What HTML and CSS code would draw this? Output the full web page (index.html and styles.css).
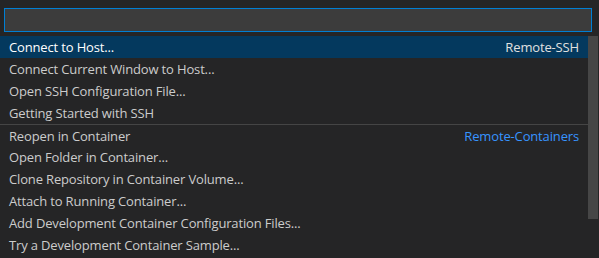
FILE: index.html
```html
<!DOCTYPE html>
<html>

<head>
	<meta charset="utf-8" />
	<title>Quick Pick</title>
	<link rel="stylesheet" href="styles.css">
</head>

<body>
	<div class="quick-input">
		<div class="filter">
			<input class="filter-box" type="text" />
		</div>
		<div class="list">
			<div class="row is-active">
				<span class="label">Connect to Host...</span>
				<span class="group">Remote-SSH</span>
			</div>
			<div class="row"><span class="label">Connect Current Window to Host...</span></div>
			<div class="row"><span class="label">Open SSH Configuration File...</span></div>
			<div class="row"><span class="label">Getting Started with SSH</span></div>
			<div class="row has-border">
				<span class="label">Reopen in Container</span>
				<span class="group is-link">Remote-Containers</span>
			</div>
			<div class="row"><span class="label">Open Folder in Container...</span></div>
			<div class="row"><span class="label">Clone Repository in Container Volume...</span></div>
			<div class="row"><span class="label">Attach to Running Container...</span></div>
			<div class="row"><span class="label">Add Development Container Configuration Files...</span></div>
			<div class="row"><span class="label">Try a Development Container Sample...</span></div>
			<div class="scrollbar"></div>
		</div>
	</div>
</body>

</html>
```

FILE: styles.css
```css
body {
	margin: 0;
	background-color: #252526;
	font-family: "Open Sans", "Noto Sans", sans-serif;
	font-size: 13px;
	letter-spacing: -0.15px;
	color: #cccccc;
}

.quick-input {
	width: 599px;
	height: 258px;
	overflow: hidden;
}

.filter {
	padding: 8px 7px 4px 4px;
}

.filter-box {
	display: block;
	box-sizing: border-box;
	width: 100%;
	height: 24px;
	margin: 0;
	background-color: #3c3c3c;
	border: 1px solid #007fd4;
	outline: none;
}

.list {
	position: relative;
	padding-right: 11px;
}

.row {
	display: flex;
	justify-content: space-between;
	align-items: center;
	box-sizing: border-box;
	height: 22px;
	padding: 0 9px 0 9px;
	white-space: nowrap;
}

.row.is-active {
	background-color: #04395e;
	color: #ffffff;
}

.row.has-border {
	border-top: 1px solid #454545;
}

.group {
	color: #e0e0e0;
}

.group.is-link {
	color: #3794ff;
}

.scrollbar {
	position: absolute;
	top: 0;
	right: 1px;
	width: 10px;
	height: 183px;
	background-color: rgba(121, 121, 121, 0.4);
}
```
